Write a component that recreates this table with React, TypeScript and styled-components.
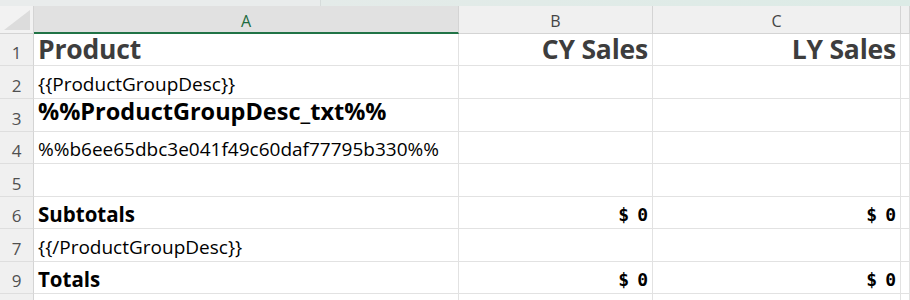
import React from 'react';
import styled, { createGlobalStyle } from 'styled-components';

const GlobalStyle = createGlobalStyle`
    html, body {
        margin: 0;
        padding: 0;
        background: #ffffff;
        overflow: hidden;
    }
`;

type Kind = 'head' | 'big' | 'bold' | 'plain';

interface RowData {
    num: string;
    a?: string;
    b?: string;
    c?: string;
    kind: Kind;
}

const rowHeights = [28, 32, 33, 33, 32, 33, 32, 33, 32, 32];

const rows: RowData[] = [
    { num: '1', a: 'Product', b: 'CY Sales', c: 'LY Sales', kind: 'head' },
    { num: '2', a: '{{ProductGroupDesc}}', kind: 'plain' },
    { num: '3', a: '%%ProductGroupDesc_txt%%', kind: 'big' },
    { num: '4', a: '%%b6ee65dbc3e041f49c60daf77795b330%%', kind: 'plain' },
    { num: '5', kind: 'plain' },
    { num: '6', a: 'Subtotals', b: '0', c: '0', kind: 'bold' },
    { num: '7', a: '{{/ProductGroupDesc}}', kind: 'plain' },
    { num: '9', a: 'Totals', b: '0', c: '0', kind: 'bold' },
    { num: '', kind: 'plain' },
];

const Amount = ({ value }: { value?: string }) => (
    <Money>
        {value !== undefined ? (
            <>
                <Sym>$</Sym>
                {value}
            </>
        ) : null}
    </Money>
);

const App = () => {
    return (
        <>
            <GlobalStyle />
            <Sheet>
                <TopStrip>
                    <StripLeft />
                    <StripRight />
                </TopStrip>
                <Grid $rows={rowHeights}>
                    <Corner>
                        <CornerTriangle />
                    </Corner>
                    <ColHead $active>A</ColHead>
                    <ColHead>B</ColHead>
                    <ColHead>C</ColHead>
                    <ColHead />
                    {rows.map((r, i) => (
                        <React.Fragment key={i}>
                            <RowNum>{r.num}</RowNum>
                            <Cell $kind={r.kind}>{r.a}</Cell>
                            {r.kind === 'head' ? (
                                <Cell $kind="head" $right>
                                    {r.b}
                                </Cell>
                            ) : (
                                <Amount value={r.b} />
                            )}
                            {r.kind === 'head' ? (
                                <Cell $kind="head" $right>
                                    {r.c}
                                </Cell>
                            ) : (
                                <Amount value={r.c} />
                            )}
                            <Cell $kind="plain" />
                        </React.Fragment>
                    ))}
                </Grid>
            </Sheet>
        </>
    );
};

const Sheet = styled.div`
    width: 910px;
    height: 300px;
    overflow: hidden;
    display: flex;
    flex-direction: column;
`;

const TopStrip = styled.div`
    height: 6px;
    display: flex;
    flex-shrink: 0;
`;

const StripLeft = styled.div`
    width: 320px;
    background: #e9ecec;
    border-right: 1px solid #d6dcdb;
`;

const StripRight = styled.div`
    flex: 1;
    background: linear-gradient(90deg, #e4ebe9, #dcebe6);
`;

const Grid = styled.div<{ $rows: number[] }>`
    display: grid;
    grid-template-columns: 34px 425px 194px 248px 1fr;
    grid-template-rows: ${(p) => p.$rows.map((h) => `${h}px`).join(' ')};
`;

const Corner = styled.div`
    background: #f2f2f2;
    border-right: 1px solid #d4d4d4;
    border-bottom: 1px solid #d4d4d4;
    position: relative;
    box-sizing: border-box;
`;

const CornerTriangle = styled.div`
    position: absolute;
    right: 3px;
    bottom: 3px;
    width: 0;
    height: 0;
    border-left: 26px solid transparent;
    border-bottom: 20px solid #dcdcdc;
`;

const ColHead = styled.div<{ $active?: boolean }>`
    box-sizing: border-box;
    display: flex;
    align-items: center;
    justify-content: center;
    padding-top: 3px;
    font-family: 'Open Sans', 'Liberation Sans', sans-serif;
    font-size: 16px;
    color: ${(p) => (p.$active ? '#1d6b3f' : '#444444')};
    background: ${(p) => (p.$active ? '#e1e1e1' : '#f0f0f0')};
    border-right: 1px solid #d4d4d4;
    border-bottom: ${(p) => (p.$active ? '2px solid #217346' : '1px solid #d4d4d4')};
`;

const RowNum = styled.div`
    box-sizing: border-box;
    display: flex;
    align-items: flex-end;
    justify-content: center;
    padding-bottom: 4px;
    line-height: 1;
    font-family: 'Open Sans', 'Liberation Sans', sans-serif;
    font-size: 17px;
    color: #505050;
    background: #f0f0f0;
    border-right: 1px solid #d4d4d4;
    border-bottom: 1px solid #dedede;
`;

const kindStyles: Record<Kind, string> = {
    head: `
        font-weight: 700;
        font-size: 26.5px;
        letter-spacing: -0.2px;
        color: #3d3d3d;
        padding-bottom: 3px;
    `,
    big: `
        font-weight: 700;
        font-size: 23.5px;
        line-height: 0.9;
        color: #000000;
        padding-bottom: 9px;
    `,
    bold: `
        font-weight: 700;
        font-size: 20.5px;
        color: #000000;
        padding-bottom: 4px;
    `,
    plain: `
        font-size: 19px;
        color: #000000;
        padding-bottom: 4px;
    `,
};

const Cell = styled.div<{ $kind: Kind; $right?: boolean }>`
    box-sizing: border-box;
    min-height: 0;
    display: flex;
    align-items: flex-end;
    justify-content: ${(p) => (p.$right ? 'flex-end' : 'flex-start')};
    padding-left: 4px;
    padding-right: 4px;
    line-height: 1;
    white-space: nowrap;
    font-family: 'Open Sans', 'Liberation Sans', sans-serif;
    border-right: 1px solid #e2e2e2;
    border-bottom: 1px solid #e2e2e2;
    ${(p) => kindStyles[p.$kind]}
`;

const Money = styled.div`
    box-sizing: border-box;
    display: flex;
    align-items: flex-end;
    justify-content: flex-end;
    padding: 0 4px 4px 0;
    line-height: 1;
    font-family: 'DejaVu Sans Mono', 'Liberation Mono', monospace;
    font-weight: 700;
    font-size: 18px;
    color: #000000;
    white-space: pre;
    border-right: 1px solid #e2e2e2;
    border-bottom: 1px solid #e2e2e2;
`;

const Sym = styled.span`
    margin-right: 8px;
`;

export default App;
